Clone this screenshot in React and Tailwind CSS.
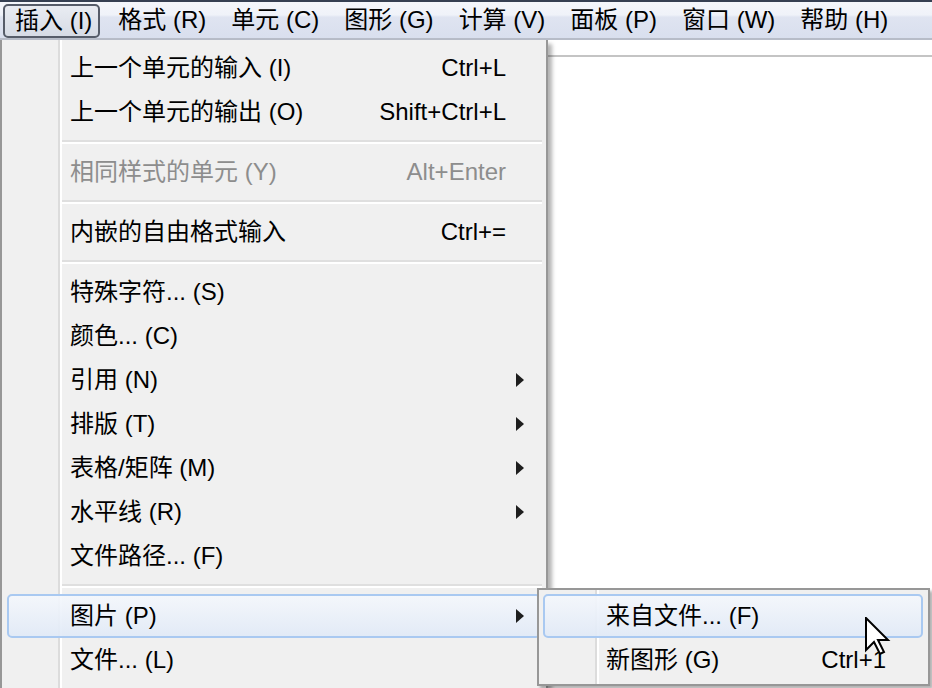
import React from "react";

const menuBar = ["插入 (I)", "格式 (R)", "单元 (C)", "图形 (G)", "计算 (V)", "面板 (P)", "窗口 (W)", "帮助 (H)"];

const insertMenu = [
  { label: "上一个单元的输入 (I)", keys: "Ctrl+L" },
  { label: "上一个单元的输出 (O)", keys: "Shift+Ctrl+L" },
  "sep",
  { label: "相同样式的单元 (Y)", keys: "Alt+Enter", disabled: true },
  "sep",
  { label: "内嵌的自由格式输入", keys: "Ctrl+=" },
  "sep",
  { label: "特殊字符... (S)" },
  { label: "颜色... (C)" },
  { label: "引用 (N)", sub: true },
  { label: "排版 (T)", sub: true },
  { label: "表格/矩阵 (M)", sub: true },
  { label: "水平线 (R)", sub: true },
  { label: "文件路径... (F)" },
  "sep",
  { label: "图片 (P)", sub: true, active: true },
  { label: "文件... (L)" },
];

const pictureMenu = [
  { label: "来自文件... (F)", active: true },
  { label: "新图形 (G)", keys: "Ctrl+1" },
];

function Arrow() {
  return (
    <svg width="8" height="14" viewBox="0 0 8 14" className="block">
      <polygon points="0,0 8,7 0,14" fill="#1e1e1e" />
    </svg>
  );
}

function Row({ item }) {
  const base =
    "mx-[5px] h-[44px] flex items-center pl-[61px] rounded-[5px] border-2 " +
    (item.active
      ? "border-[#a9c9f1] bg-[linear-gradient(to_bottom,rgba(244,247,252,0.92),rgba(225,234,247,0.92))]"
      : "border-transparent");
  return (
    <div className={base}>
      <span className={"flex-1 whitespace-nowrap " + (item.disabled ? "text-[#8d8d8d]" : "text-black")}>
        {item.label}
      </span>
      {item.keys && (
        <span className={"whitespace-nowrap " + (item.disabled ? "text-[#8d8d8d]" : "text-black")}>
          {item.keys}
        </span>
      )}
      <span className="w-[33px] pl-[10px] flex items-center">{item.sub && <Arrow />}</span>
    </div>
  );
}

function Separator() {
  return (
    <div className="h-[16px] flex flex-col justify-center ml-[60px] mr-[4px]">
      <div className="h-[2px] bg-[#dfdfdf]" />
      <div className="h-[2px] bg-white" />
    </div>
  );
}

function Gutter() {
  return (
    <>
      <div className="absolute top-0 bottom-0 left-[56px] w-[2px] bg-[#dcdcdc]" />
      <div className="absolute top-0 bottom-0 left-[58px] w-[2px] bg-white" />
    </>
  );
}

export default function App() {
  return (
    <div
      className="relative w-[932px] h-[688px] overflow-hidden bg-white text-[24px] leading-none"
      style={{ fontFamily: '"Liberation Sans", "Noto Sans CJK SC", sans-serif' }}
    >
      {/* window frame edge */}
      <div className="h-[2px] bg-[#364052]" />

      {/* menu bar */}
      <div className="h-[38px] flex items-stretch pl-[2px] border-b-2 border-[#b7bcc8] bg-[linear-gradient(to_bottom,#f5f7fb_0%,#eff2f9_36%,#dfe4f1_42%,#d9dfee_100%)]">
        {menuBar.map((m, i) =>
          i === 0 ? (
            <div
              key={m}
              className="ml-[1px] mr-[5px] mt-[2px] h-[34px] flex items-center pl-[10px] pr-[6px] border-2 border-[#565c69] rounded-[5px] bg-[linear-gradient(to_bottom,#e9ecf2,#d6dbe5)] whitespace-nowrap"
            >
              {m}
            </div>
          ) : (
            <div key={m} className="h-[36px] flex items-center pl-[13px] pr-[12px] whitespace-nowrap">
              {m}
            </div>
          )
        )}
      </div>

      {/* document area */}
      <div className="pl-[548px]">
        <div className="h-[15px]" />
        <div className="h-[2px] bg-[#c4c4c4]" />
      </div>

      {/* Insert menu */}
      <div className="absolute left-0 top-[40px] w-[548px] h-[680px] border-l-2 border-r-2 border-[#979797] bg-[#f0f0f0] pt-[6px] shadow-[4px_4px_4px_rgba(0,0,0,0.3)]">
        <Gutter />
        <div className="relative">
          {insertMenu.map((item, i) =>
            item === "sep" ? <Separator key={i} /> : <Row key={i} item={item} />
          )}
        </div>
      </div>

      {/* Picture submenu */}
      <div className="absolute left-[537px] top-[588px] w-[393px] border-2 border-[#979797] bg-[#f0f0f0] pt-[4px] pb-[2px] shadow-[3px_3px_3px_rgba(0,0,0,0.3)]">
        <Gutter />
        <div className="relative">
          {pictureMenu.map((item, i) => (
            <div
              key={i}
              className={
                "ml-[4px] mr-[5px] h-[44px] flex items-center pl-[61px] rounded-[5px] border-2 " +
                (item.active
                  ? "border-[#a9c9f1] bg-[linear-gradient(to_bottom,rgba(244,247,252,0.92),rgba(225,234,247,0.92))]"
                  : "border-transparent")
              }
            >
              <span className="flex-1 whitespace-nowrap">{item.label}</span>
              {item.keys && <span className="whitespace-nowrap">{item.keys}</span>}
              <span className="w-[35px]" />
            </div>
          ))}
        </div>
      </div>

      {/* mouse pointer */}
      <svg
        className="absolute left-[865px] top-[617px]"
        width="26"
        height="40"
        viewBox="0 0 13 20"
      >
        <path
          d="M0.5 0.5 V16.5 L4.5 12.5 L7.5 18.5 L9.5 17.5 L6.5 11.5 H11.5 Z"
          fill="#ffffff"
          stroke="#000000"
          strokeWidth="1"
          strokeLinejoin="miter"
        />
      </svg>
    </div>
  );
}
